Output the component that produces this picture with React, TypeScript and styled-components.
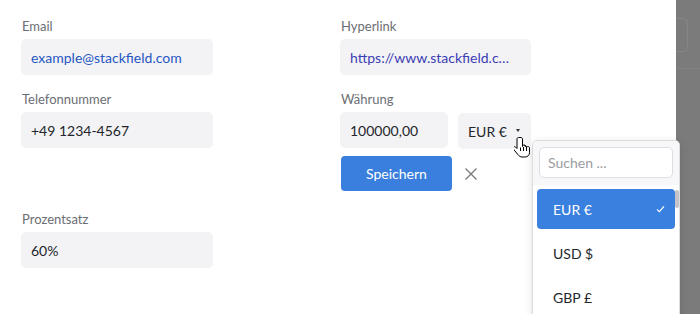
import React from "react";
import styled, { createGlobalStyle } from "styled-components";

const Global = createGlobalStyle`
  html, body { margin: 0; padding: 0; }
  body { font-family: Lato, "Noto Sans", sans-serif; background: #fff; }
  * { box-sizing: border-box; }
`;

const Page = styled.div`
  display: flex;
  width: 700px;
  height: 314px;
  overflow: hidden;
`;

const Panel = styled.div`
  width: 676px;
  height: 314px;
  background: #fff;
  padding: 18px 0 0 21px;
  position: relative;
`;

const Overlay = styled.div`
  flex: 1;
  background: #7b7b7b;
  display: flex;
  flex-direction: column;
`;

const OverlayTop = styled.div`
  height: 69px;
  border-bottom: 1px solid #828282;
  padding-top: 18px;
`;

const GhostBox = styled.div`
  width: 12px;
  height: 34px;
  border: 1px solid #868686;
  border-left: none;
  border-radius: 0 5px 5px 0;
`;

const Grid = styled.div`
  display: grid;
  grid-template-columns: 192px 191px;
  column-gap: 127px;
  row-gap: 16px;
  align-items: start;
`;

const Field = styled.div`
  display: flex;
  flex-direction: column;
`;

const Label = styled.div`
  font-size: 13px;
  line-height: 16px;
  color: #6b6e74;
  margin-bottom: 5px;
  padding-left: 1px;
`;

const InputBox = styled.div<{ $color?: string; $width?: number }>`
  height: 36px;
  width: ${(p) => (p.$width ? `${p.$width}px` : "100%")};
  background: #f3f3f5;
  border-radius: 5px;
  padding: 0 10px;
  display: flex;
  align-items: center;
  font-size: 14px;
  color: ${(p) => p.$color ?? "#23262b"};
  white-space: nowrap;
  overflow: hidden;
`;

const Ellipsis = styled.span`
  overflow: hidden;
  text-overflow: ellipsis;
  white-space: nowrap;
  display: block;
  padding-right: 8px;
`;

const CurrencyRow = styled.div`
  display: flex;
  gap: 10px;
`;

const SelectWrap = styled.div`
  position: relative;
`;

const SelectBox = styled.div`
  height: 36px;
  width: 73px;
  background: #f3f3f5;
  border-radius: 5px;
  padding: 0 10px;
  display: flex;
  align-items: center;
  justify-content: space-between;
  font-size: 14px;
  color: #23262b;
  margin-top: 1px;
`;

const Caret = styled.span`
  width: 0;
  height: 0;
  border-left: 2.5px solid transparent;
  border-right: 2.5px solid transparent;
  border-top: 3px solid #333;
  margin-right: 1px;
  margin-bottom: 2px;
`;

const Actions = styled.div`
  display: flex;
  align-items: center;
  gap: 13px;
  margin-top: 7px;
  margin-bottom: 4px;
`;

const SaveButton = styled.button`
  width: 111px;
  height: 35px;
  border: none;
  border-radius: 4px;
  background: #3a7fdd;
  color: #fff;
  font-family: inherit;
  font-size: 14px;
  margin-left: 1px;
`;

const CloseBtn = styled.span`
  display: flex;
  width: 12px;
  height: 12px;
`;

const Dropdown = styled.div`
  position: absolute;
  top: 28px;
  left: 74px;
  width: 148px;
  height: 200px;
  background: #fff;
  border: 1px solid #dcdcdf;
  border-radius: 5px 5px 0 0;
  box-shadow: 0 2px 8px rgba(0, 0, 0, 0.12);
  z-index: 5;
  overflow: hidden;
`;

const SearchArea = styled.div`
  background: #f7f7f9;
  padding: 6px 6px 7px 6px;
`;

const SearchInput = styled.div`
  height: 31px;
  background: #fff;
  border: 1px solid #dedee2;
  border-radius: 5px;
  padding: 0 8px;
  display: flex;
  align-items: center;
  font-size: 14px;
  color: #9a9ca1;
`;

const ListArea = styled.div`
  position: relative;
  padding: 4px 4px 0 4px;
  display: flex;
  flex-direction: column;
  gap: 4px;
`;

const Option = styled.div<{ $active?: boolean }>`
  height: 40px;
  border-radius: 4px;
  padding: 0 10px 0 16px;
  display: flex;
  align-items: center;
  justify-content: space-between;
  font-size: 14px;
  background: ${(p) => (p.$active ? "#3a80de" : "transparent")};
  color: ${(p) => (p.$active ? "#fff" : "#23262b")};
`;

const ScrollThumb = styled.div`
  position: absolute;
  right: 0;
  top: 5px;
  width: 4px;
  height: 18px;
  background: #c4c4c8;
  border-radius: 2px;
`;

const Cursor = styled.svg`
  position: absolute;
  left: 56px;
  top: 24px;
  z-index: 6;
`;

export default function App() {
  return (
    <Page>
      <Global />
      <Panel>
        <Grid>
          <Field>
            <Label>Email</Label>
            <InputBox $color="#2657c4">example@stackfield.com</InputBox>
          </Field>
          <Field>
            <Label>Hyperlink</Label>
            <InputBox $color="#3b3db4">
              <Ellipsis>https://www.stackfield.com</Ellipsis>
            </InputBox>
          </Field>
          <Field>
            <Label>Telefonnummer</Label>
            <InputBox>+49 1234-4567</InputBox>
          </Field>
          <Field>
            <Label>Währung</Label>
            <CurrencyRow>
              <InputBox $width={108}>100000,00</InputBox>
              <SelectWrap>
                <SelectBox>
                  <span>EUR €</span>
                  <Caret />
                </SelectBox>
                <Cursor width="18" height="24" viewBox="0 0 18 24">
                  <path
                    d="M5.5 1.5c-.9 0-1.5.7-1.5 1.5v9.5l-1.4-1.4c-.6-.6-1.6-.6-2.1 0-.6.6-.6 1.5 0 2.1l4.6 5.6c1 1.2 2.3 2.2 3.9 2.2h3.2c2.3 0 4.3-1.9 4.3-4.2V12c0-.8-.7-1.5-1.5-1.5s-1.5.7-1.5 1.5v-1c0-.8-.7-1.5-1.5-1.5S12.5 10.2 12.5 11v-.5c0-.8-.7-1.5-1.5-1.5s-1.5.7-1.5 1.5V3c0-.8-.6-1.5-1.5-1.5z"
                    transform="translate(-1 0)"
                    fill="#fff"
                    stroke="#000"
                    strokeWidth="1"
                    strokeLinejoin="round"
                  />
                  <path d="M7.5 15v-3.5M10.5 15v-4M13.5 15v-3" stroke="#000" strokeWidth="1" transform="translate(-1 0)" />
                </Cursor>
                <Dropdown>
                  <SearchArea>
                    <SearchInput>Suchen ...</SearchInput>
                  </SearchArea>
                  <ListArea>
                    <ScrollThumb />
                    <Option $active>
                      <span>EUR €</span>
                      <svg width="9" height="8" viewBox="0 0 9 8">
                        <path d="M1 4.3l2.4 2.4L8 1.3" fill="none" stroke="#fff" strokeWidth="1.2" />
                      </svg>
                    </Option>
                    <Option>USD $</Option>
                    <Option>GBP £</Option>
                  </ListArea>
                </Dropdown>
              </SelectWrap>
            </CurrencyRow>
            <Actions>
              <SaveButton>Speichern</SaveButton>
              <CloseBtn>
                <svg width="12" height="12" viewBox="0 0 12 12">
                  <path d="M0.5 0.5l11 11M11.5 0.5l-11 11" stroke="#77797d" strokeWidth="1.3" />
                </svg>
              </CloseBtn>
            </Actions>
          </Field>
          <Field>
            <Label>Prozentsatz</Label>
            <InputBox>60%</InputBox>
          </Field>
        </Grid>
      </Panel>
      <Overlay>
        <OverlayTop>
          <GhostBox />
        </OverlayTop>
      </Overlay>
    </Page>
  );
}
